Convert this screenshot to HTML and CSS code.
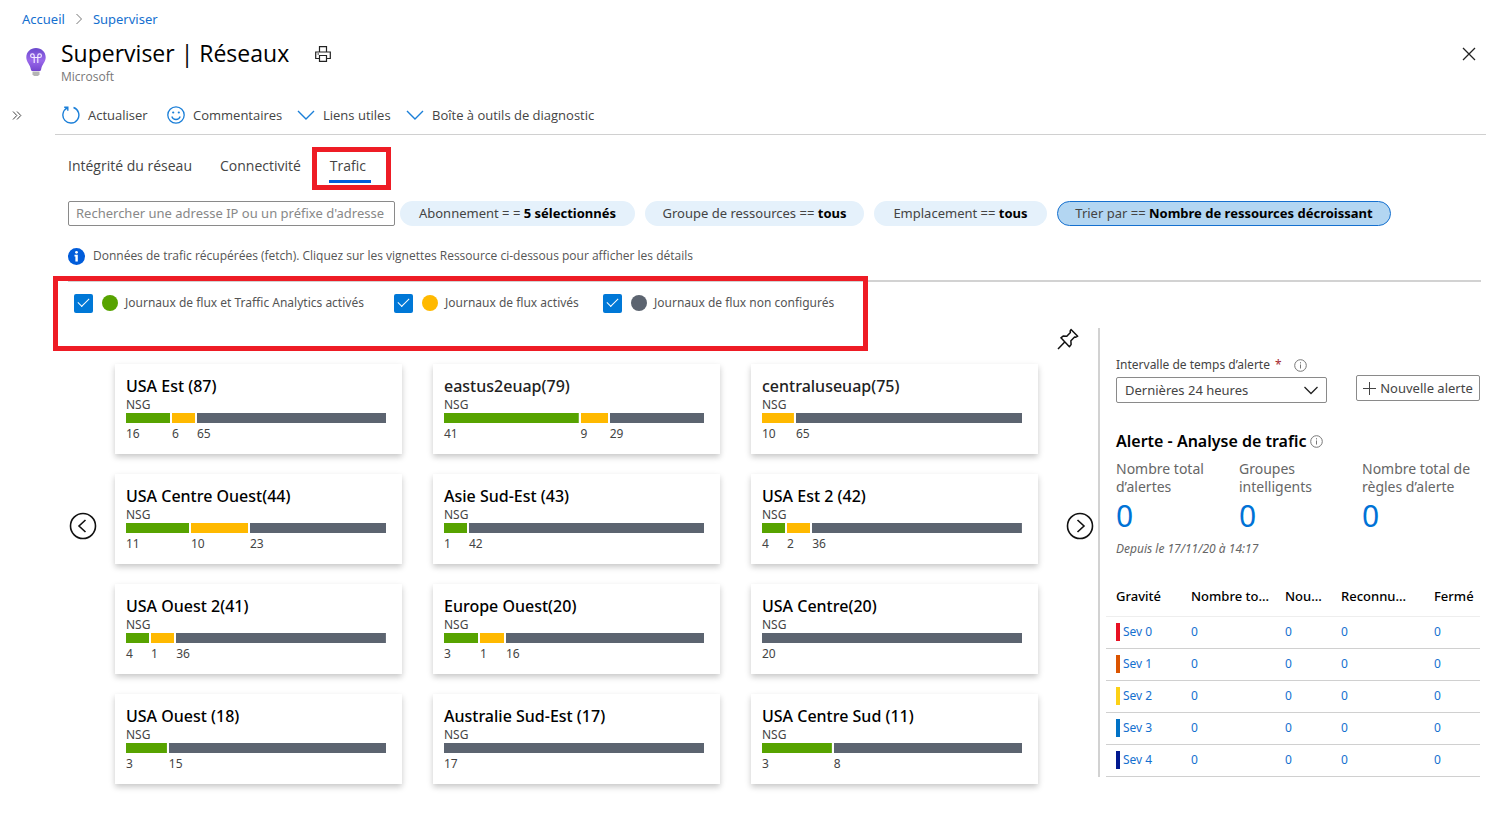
FILE: index.html
```html
<!DOCTYPE html>
<html lang="fr">
<head>
<meta charset="utf-8">
<meta name="viewport" content="width=device-width, initial-scale=1">
<title>Superviser | Réseaux</title>
<link rel="stylesheet" href="styles.css">
</head>
<body>
<header class="top">
  <nav class="crumbs" aria-label="Fil d'Ariane">
    <a href="#">Accueil</a>
    <svg width="8" height="12" viewBox="0 0 8 12" fill="none" stroke="#777"><path d="M1.500 1l5 5-5 5"/></svg>
    <a href="#">Superviser</a>
  </nav>
  <div class="heading">
    <svg class="bulb" width="20" height="30" viewBox="0 0 20 30">
      <defs><linearGradient id="bulb" x1="0" y1="0" x2="0" y2="1"><stop offset="0" stop-color="#6a48cc"/><stop offset=".55" stop-color="#9a68ea"/><stop offset="1" stop-color="#7445cf"/></linearGradient></defs>
      <path fill="url(#bulb)" d="M10 1c5.500 0 9.700 4 9.700 9.300 0 5.200-3.900 7-4.600 12.200-.1.900-.6 1.500-1.500 1.500H6.400c-.9 0-1.400-.6-1.500-1.500C4.200 17.300.3 15.500.3 10.300.3 5 4.500 1 10 1z"/>
      <path fill="none" stroke="#f2e9ff" stroke-width="1.200" d="M8.200 16V8.700A1.800 1.800 0 1 0 6.400 10.500h7.200a1.800 1.800 0 1 0-1.800-1.800V16"/>
      <path fill="#b4b4b4" d="M6.500 24.500h7v3l-1.500 1.500H8l-1.500-1.500z"/>
    </svg>
    <div class="titles">
      <h1>Superviser | Réseaux</h1>
      <p>Microsoft</p>
    </div>
    <button class="plain print" aria-label="Imprimer">
      <svg width="16" height="16" viewBox="0 0 16 16" fill="none" stroke="#222" stroke-width="1.200"><path d="M4.500 6V.700h7V6M4.500 12.500H.700V6h14.600v6.500h-3.800M4.500 9.500h7v5.800h-7zM2.500 8H4"/></svg>
    </button>
    <button class="plain close" aria-label="Fermer">
      <svg width="14" height="14" viewBox="0 0 14 14" fill="none" stroke="#222" stroke-width="1.300"><path d="M1 1l12 12M13 1L1 13"/></svg>
    </button>
  </div>
</header>
<div class="shell">
  <div class="rail">
    <button class="plain" aria-label="Développer le menu">
      <svg width="10" height="9" viewBox="0 0 10 9" fill="none" stroke="#444"><path d="M1 .5l3.800 4L1 8.500M5 .5l3.800 4L5 8.500"/></svg>
    </button>
  </div>
  <main class="content">
    <div class="toolbar">
      <button class="plain tool tool-refresh"><svg width="18" height="18" viewBox="0 0 18 18" fill="none" stroke="#1b7fd8" stroke-width="1.400"><path d="M11.500 1.500a8 8 0 1 1-6.200.400M2.200 1.200h3.600v3.600"/></svg><span>Actualiser</span></button>
      <button class="plain tool tool-comment"><svg width="18" height="18" viewBox="0 0 18 18" fill="none" stroke="#1b7fd8" stroke-width="1.300"><circle cx="9" cy="9" r="8.200"/><path d="M4.800 10.500c.7 2 2.300 3 4.200 3s3.500-1 4.200-3"/><g fill="#1b7fd8" stroke="none"><circle cx="6.200" cy="6.500" r="1.100"/><circle cx="11.800" cy="6.500" r="1.100"/></g></svg><span>Commentaires</span></button>
      <button class="plain tool tool-links"><svg width="18" height="18" viewBox="0 0 18 18" fill="none" stroke="#1b7fd8" stroke-width="1.400"><path d="M1 5l8 8 8-8"/></svg><span>Liens utiles</span></button>
      <button class="plain tool"><svg width="18" height="18" viewBox="0 0 18 18" fill="none" stroke="#1b7fd8" stroke-width="1.400"><path d="M1 5l8 8 8-8"/></svg><span>Boîte à outils de diagnostic</span></button>
    </div>
    <div class="page">
      <div class="tabs" role="tablist">
        <button class="plain tab" role="tab" aria-selected="false">Intégrité du réseau</button>
        <button class="plain tab" role="tab" aria-selected="false">Connectivité</button>
        <button class="plain tab tab-on" role="tab" aria-selected="true">Trafic</button>
      </div>
      <div class="filters">
        <input class="search" type="text" aria-label="Rechercher" placeholder="Rechercher une adresse IP ou un préfixe d'adresse">
        <button class="chip chip-sub">Abonnement = = <b>5 sélectionnés</b></button>
        <button class="chip chip-group">Groupe de ressources == <b>tous</b></button>
        <button class="chip chip-place">Emplacement == <b>tous</b></button>
        <button class="chip chip-sort">Trier par == <b>Nombre de ressources décroissant</b></button>
      </div>
      <p class="info">
        <svg width="17" height="17" viewBox="0 0 17 17"><circle cx="8.500" cy="8.500" r="8.500" fill="#015cda"/><circle cx="8.500" cy="4.300" r="1.400" fill="#fff"/><path fill="#fff" d="M6.500 6.800h3.300v6.700H7.400V8.400h-.9z"/></svg>
        Données de trafic récupérées (fetch). Cliquez sur les vignettes Ressource ci-dessous pour afficher les détails
      </p>
      <div class="legend">
        <label class="key-analytics"><input type="checkbox" checked><i class="dot green"></i>Journaux de flux et Traffic Analytics activés</label>
        <label class="key-flow"><input type="checkbox" checked><i class="dot amber"></i>Journaux de flux activés</label>
        <label><input type="checkbox" checked><i class="dot slate"></i>Journaux de flux non configurés</label>
      </div>
      <div class="split">
        <section class="board">
          <button class="plain pin" aria-label="Épingler">
            <svg width="22" height="22" viewBox="0 0 22 22" fill="none" stroke="#111" stroke-width="1.500" stroke-linejoin="round"><path d="M14 1.500l6.700 6.700-1.800 1-1.300-.2-3.700 3.800.2 3.800-1.700 2.100L3.900 9.800l2.200-1.700 3.700.1 3.600-3.800-.3-1.300zM7.500 14.200L1 21"/></svg>
          </button>
          <button class="plain arrow" aria-label="Précédent">
            <svg width="28" height="28" viewBox="0 0 28 28" fill="none" stroke="#111" stroke-width="1.600"><circle cx="14" cy="14" r="12.500"/><path d="M16.500 8L10 14l6.500 6"/></svg>
          </button>
          <div class="cards">
            <article class="card"><h2>USA Est (87)</h2><p>NSG</p><div class="bar"><span class="green" style="flex-grow:44">16</span><span class="amber" style="flex-grow:23">6</span><span class="slate" style="flex-grow:189">65</span></div></article>
            <article class="card"><h2 class="soft">eastus2euap(79)</h2><p>NSG</p><div class="bar"><span class="green" style="flex-grow:134">41</span><span class="amber" style="flex-grow:27">9</span><span class="slate" style="flex-grow:94">29</span></div></article>
            <article class="card"><h2 class="soft">centraluseuap(75)</h2><p>NSG</p><div class="bar"><span class="amber" style="flex-grow:32">10</span><span class="slate" style="flex-grow:227">65</span></div></article>
            <article class="card"><h2>USA Centre Ouest(44)</h2><p>NSG</p><div class="bar"><span class="green" style="flex-grow:63">11</span><span class="amber" style="flex-grow:57">10</span><span class="slate" style="flex-grow:136">23</span></div></article>
            <article class="card"><h2>Asie Sud-Est (43)</h2><p>NSG</p><div class="bar"><span class="green" style="flex-grow:23">1</span><span class="slate" style="flex-grow:235">42</span></div></article>
            <article class="card"><h2>USA Est 2 (42)</h2><p>NSG</p><div class="bar"><span class="green" style="flex-grow:23">4</span><span class="amber" style="flex-grow:23">2</span><span class="slate" style="flex-grow:209">36</span></div></article>
            <article class="card"><h2>USA Ouest 2(41)</h2><p>NSG</p><div class="bar"><span class="green" style="flex-grow:23">4</span><span class="amber" style="flex-grow:23">1</span><span class="slate" style="flex-grow:209">36</span></div></article>
            <article class="card"><h2>Europe Ouest(20)</h2><p>NSG</p><div class="bar"><span class="green" style="flex-grow:34">3</span><span class="amber" style="flex-grow:24">1</span><span class="slate" style="flex-grow:198">16</span></div></article>
            <article class="card"><h2>USA Centre(20)</h2><p>NSG</p><div class="bar"><span class="slate" style="flex-grow:20">20</span></div></article>
            <article class="card"><h2>USA Ouest (18)</h2><p>NSG</p><div class="bar"><span class="green" style="flex-grow:41">3</span><span class="slate" style="flex-grow:218">15</span></div></article>
            <article class="card"><h2>Australie Sud-Est (17)</h2><p>NSG</p><div class="bar"><span class="slate" style="flex-grow:17">17</span></div></article>
            <article class="card"><h2>USA Centre Sud (11)</h2><p>NSG</p><div class="bar"><span class="green" style="flex-grow:70">3</span><span class="slate" style="flex-grow:189">8</span></div></article>
          </div>
          <button class="plain arrow" aria-label="Suivant">
            <svg width="28" height="28" viewBox="0 0 28 28" fill="none" stroke="#111" stroke-width="1.600"><circle cx="14" cy="14" r="12.500"/><path d="M11.500 8l6.500 6-6.500 6"/></svg>
          </button>
        </section>
        <aside class="alerts">
          <div class="controls">
            <div class="range">
              <label for="range">Intervalle de temps d’alerte<em>*</em>
                <svg width="13" height="13" viewBox="0 0 13 13" fill="none" stroke="#777"><circle cx="6.500" cy="6.500" r="5.800"/><path d="M6.500 5.500v4M6.500 3.200v1.200"/></svg>
              </label>
              <div class="select">
                <select id="range"><option>Dernières 24 heures</option></select>
                <svg width="14" height="9" viewBox="0 0 14 9" fill="none" stroke="#222" stroke-width="1.300"><path d="M.5 1L7 7.500 13.500 1"/></svg>
              </div>
            </div>
            <button class="new"><svg width="13" height="13" viewBox="0 0 13 13" stroke="#444"><path d="M6.500 0v13M0 6.500h13"/></svg>Nouvelle alerte</button>
          </div>
          <h2 class="alert-title">Alerte - Analyse de trafic
            <svg width="13" height="13" viewBox="0 0 13 13" fill="none" stroke="#777"><circle cx="6.500" cy="6.500" r="5.800"/><path d="M6.500 5.500v4M6.500 3.200v1.200"/></svg>
          </h2>
          <dl class="stats">
            <div><dt>Nombre total d’alertes</dt><dd>0</dd></div>
            <div><dt>Groupes intelligents</dt><dd>0</dd></div>
            <div><dt>Nombre total de règles d’alerte</dt><dd>0</dd></div>
          </dl>
          <p class="since">Depuis le 17/11/20 à 14:17</p>
          <table>
            <colgroup><col class="c-sev"><col class="c-total"><col class="c-new"><col class="c-ack"><col class="c-closed"></colgroup>
            <thead><tr><th>Gravité</th><th>Nombre to...</th><th>Nou...</th><th>Reconnu...</th><th>Fermé</th></tr></thead>
            <tbody>
              <tr><td><a class="sev sev0" href="#">Sev 0</a></td><td><a href="#">0</a></td><td><a href="#">0</a></td><td><a href="#">0</a></td><td><a href="#">0</a></td></tr>
              <tr><td><a class="sev sev1" href="#">Sev 1</a></td><td><a href="#">0</a></td><td><a href="#">0</a></td><td><a href="#">0</a></td><td><a href="#">0</a></td></tr>
              <tr><td><a class="sev sev2" href="#">Sev 2</a></td><td><a href="#">0</a></td><td><a href="#">0</a></td><td><a href="#">0</a></td><td><a href="#">0</a></td></tr>
              <tr><td><a class="sev sev3" href="#">Sev 3</a></td><td><a href="#">0</a></td><td><a href="#">0</a></td><td><a href="#">0</a></td><td><a href="#">0</a></td></tr>
              <tr><td><a class="sev sev4" href="#">Sev 4</a></td><td><a href="#">0</a></td><td><a href="#">0</a></td><td><a href="#">0</a></td><td><a href="#">0</a></td></tr>
            </tbody>
          </table>
        </aside>
      </div>
    </div>
  </main>
</div>
</body>
</html>
```
FILE: styles.css
```css
* { box-sizing: border-box; }

body {
  margin: 0;
  padding-bottom: 24px;
  background: #fff;
  color: #444;
  font: 13px/18px "Noto Sans", "Open Sans", sans-serif;
}

h1, h2, p, dl, dd { margin: 0; }
svg { display: block; flex: none; }
a { color: #1570cf; text-decoration: none; }
button, input, select { font: inherit; color: inherit; }

.plain {
  display: block;
  padding: 0;
  border: 0;
  background: none;
}

.titles, .toolbar, .tabs, .info { font-family: "Open Sans", "Noto Sans", sans-serif; }

/* Page header */
.top { padding: 9px 31px 0 22px; }

.crumbs {
  display: flex;
  align-items: center;
  gap: 10px;
  height: 20px;
}

.heading {
  display: flex;
  align-items: flex-start;
  padding: 7px 0 0 4px;
}

.bulb { margin: 11px 15px 0 0; }

.titles h1 {
  color: #000;
  font-size: 23px;
  font-weight: 400;
  line-height: 34px;
}

.titles p {
  color: #777;
  font-size: 12px;
  line-height: 14px;
}

.print { margin: 10px 0 0 26px; }
.close { margin: 11px 0 0 auto; }

.shell {
  display: flex;
  margin-top: 12px;
}

.rail {
  flex: none;
  width: 55px;
  padding: 15px 0 0 12px;
}

.content {
  flex: 1;
  min-width: 0;
  padding-right: 21px;
}

.toolbar {
  display: flex;
  height: 39px;
  padding-left: 7px;
  border-bottom: 1px solid #d0d0d0;
}

.tool {
  display: flex;
  align-items: center;
  gap: 8px;
}

.tool-refresh { width: 105px; }
.tool-comment { width: 130px; }
.tool-links { width: 109px; }

.page { padding: 19px 5px 0 13px; }

/* Tabs */
.tabs {
  display: flex;
  gap: 28px;
  font-size: 14px;
}

.tab {
  height: 29px;
  padding-bottom: 5px;
  line-height: 24px;
}

.tab-on {
  position: relative;
  width: 42px;
  padding: 0 0 2px 1px;
  border-bottom: 3px solid #015cda;
  text-align: left;
}

.tab-on::after {
  content: "";
  position: absolute;
  inset: -7px -20px -10px -17px;
  border: 5px solid #ee1c25;
}

/* Filters */
.filters {
  display: flex;
  margin-top: 18px;
}

.search {
  width: 327px;
  height: 25px;
  margin-right: 5px;
  padding: 0 7px 1px;
  border: 1px solid #8a8a8a;
  border-radius: 2px;
}

.search::placeholder { color: #888; opacity: 1; }

.chip {
  height: 25px;
  margin-right: 10px;
  padding: 0 0 1px;
  border: 0;
  border-radius: 13px;
  background: #e5f1fb;
  white-space: nowrap;
}

.chip b { color: #000; }
.chip-sub { width: 235px; }
.chip-group { width: 219px; }
.chip-place { width: 173px; }

.chip-sort {
  width: 334px;
  border: 1px solid #1570cf;
  background: #b3d6f2;
}

.info {
  display: flex;
  align-items: center;
  gap: 8px;
  margin-top: 21px;
  padding-bottom: 15px;
  border-bottom: 2px solid #d2d2d2;
  color: #555;
  font-size: 12px;
}

/* Legend */
.legend {
  position: relative;
  display: flex;
  gap: 19px;
  padding: 11px 0 0 6px;
  color: #555;
  font-size: 12px;
}

.legend::after {
  content: "";
  position: absolute;
  top: -6px;
  bottom: -38px;
  left: -15px;
  width: 805px;
  border: 5px solid #ee1c25;
  pointer-events: none;
}

.legend label {
  display: flex;
  align-items: center;
  height: 20px;
}

.key-analytics { width: 301px; }
.key-flow { width: 190px; }

.legend input {
  appearance: none;
  width: 19px;
  height: 19px;
  margin: 0 9px 0 0;
  border-radius: 2px;
  background: #0078d7;
}

.legend input:checked::before {
  content: "";
  display: block;
  width: 10px;
  height: 5px;
  margin: 4px 0 0 4px;
  border: solid #fff;
  border-width: 0 0 1px 1px;
  transform: rotate(-45deg);
}

.dot {
  width: 16px;
  height: 16px;
  margin-right: 7px;
  border-radius: 50%;
}

.green { background-color: #57a300; }
.amber { background-color: #ffb900; }
.slate { background-color: #5c6470; }

/* Region cards */
.split {
  display: flex;
  gap: 4px;
  align-items: flex-start;
  margin-top: 15px;
  padding-right: 1px;
}

.board {
  flex: 1;
  display: grid;
  grid-template-columns: 28px 1fr 28px;
  grid-template-rows: 36px auto;
  column-gap: 18px;
  align-items: start;
  padding-left: 1px;
}

.pin {
  grid-column: 1 / -1;
  justify-self: end;
  margin-right: 15px;
}

.arrow { margin-top: 148px; }

.cards {
  display: grid;
  grid-template-columns: repeat(3, 1fr);
  gap: 20px 31px;
  margin-right: 10px;
}

.card {
  padding: 11px 16px 10px 11px;
  background: #fff;
  box-shadow: 0 3px 6px rgba(0, 0, 0, .22);
}

.card h2 {
  color: #000;
  font-size: 16px;
  font-weight: 500;
  line-height: 22px;
}

.card .soft { color: #222; }

.card p {
  font-size: 12px;
  line-height: 16px;
}

.bar {
  display: flex;
  gap: 2px;
  font-size: 12px;
  line-height: 20px;
}

/* Each segment is a strip of colour above its count */
.bar span {
  flex: 1 1 0;
  width: 0;
  padding-top: 11px;
}

.bar .green { background: linear-gradient(#57a300 0 0) top / 100% 10px no-repeat; }
.bar .amber { background: linear-gradient(#ffb900 0 0) top / 100% 10px no-repeat; }
.bar .slate { background: linear-gradient(#5c6470 0 0) top / 100% 10px no-repeat; }

/* Alerts */
.alerts {
  flex: none;
  width: 382px;
  padding: 28px 0 0 6px;
  border-left: 2px solid #d2d2d2;
}

.controls {
  display: flex;
  justify-content: space-between;
  align-items: flex-end;
  padding-left: 10px;
}

.range label {
  display: flex;
  align-items: center;
  font-size: 12px;
}

.range em {
  margin: 0 12px 0 5px;
  color: #a4262c;
  font-style: normal;
}

.select {
  position: relative;
  width: 211px;
  margin-top: 3px;
}

.select select {
  appearance: none;
  display: block;
  width: 100%;
  height: 26px;
  padding: 0 8px;
  border: 1px solid #8a8a8a;
  border-radius: 2px;
  background: #fff;
}

.select svg {
  position: absolute;
  top: 9px;
  right: 9px;
  pointer-events: none;
}

.new {
  display: flex;
  align-items: center;
  justify-content: center;
  gap: 4px;
  width: 124px;
  height: 26px;
  margin-bottom: 2px;
  padding: 0;
  border: 1px solid #8a8a8a;
  border-radius: 2px;
  background: #fff;
  white-space: nowrap;
}

.alert-title {
  display: flex;
  align-items: center;
  gap: 4px;
  margin-top: 26px;
  padding-left: 10px;
  color: #000;
  font-size: 16px;
  font-weight: 600;
  line-height: 24px;
}

.stats {
  display: grid;
  grid-template-columns: 95px 95px 1fr;
  column-gap: 28px;
  margin-top: 7px;
  padding-left: 10px;
}

.stats dt {
  color: #666;
  font-size: 14px;
}

.stats dd {
  color: #0072d6;
  font-size: 30px;
  line-height: 39px;
}

.since {
  margin-top: 5px;
  padding-left: 10px;
  color: #666;
  font-size: 12px;
  font-style: italic;
}

table {
  width: 100%;
  margin-top: 22px;
  border-collapse: collapse;
  table-layout: fixed;
}

.c-sev { width: 85px; }
.c-total { width: 94px; }
.c-new { width: 56px; }
.c-ack { width: 93px; }

th, td {
  padding: 0;
  border-bottom: 1px solid #d0d0d0;
  text-align: left;
  white-space: nowrap;
}

th {
  height: 36px;
  padding-bottom: 4px;
  border-color: #eee;
  color: #000;
  font-weight: 500;
}

td {
  height: 32px;
  font-size: 12px;
}

th:first-child, td:first-child { padding-left: 10px; }

.sev {
  display: block;
  padding-left: 3px;
  border-left: 4px solid;
}

.sev0 { border-color: #e81123; }
.sev1 { border-color: #db5400; }
.sev2 { border-color: #fcd116; }
.sev3 { border-color: #0072c6; }
.sev4 { border-color: #00188f; }
```
